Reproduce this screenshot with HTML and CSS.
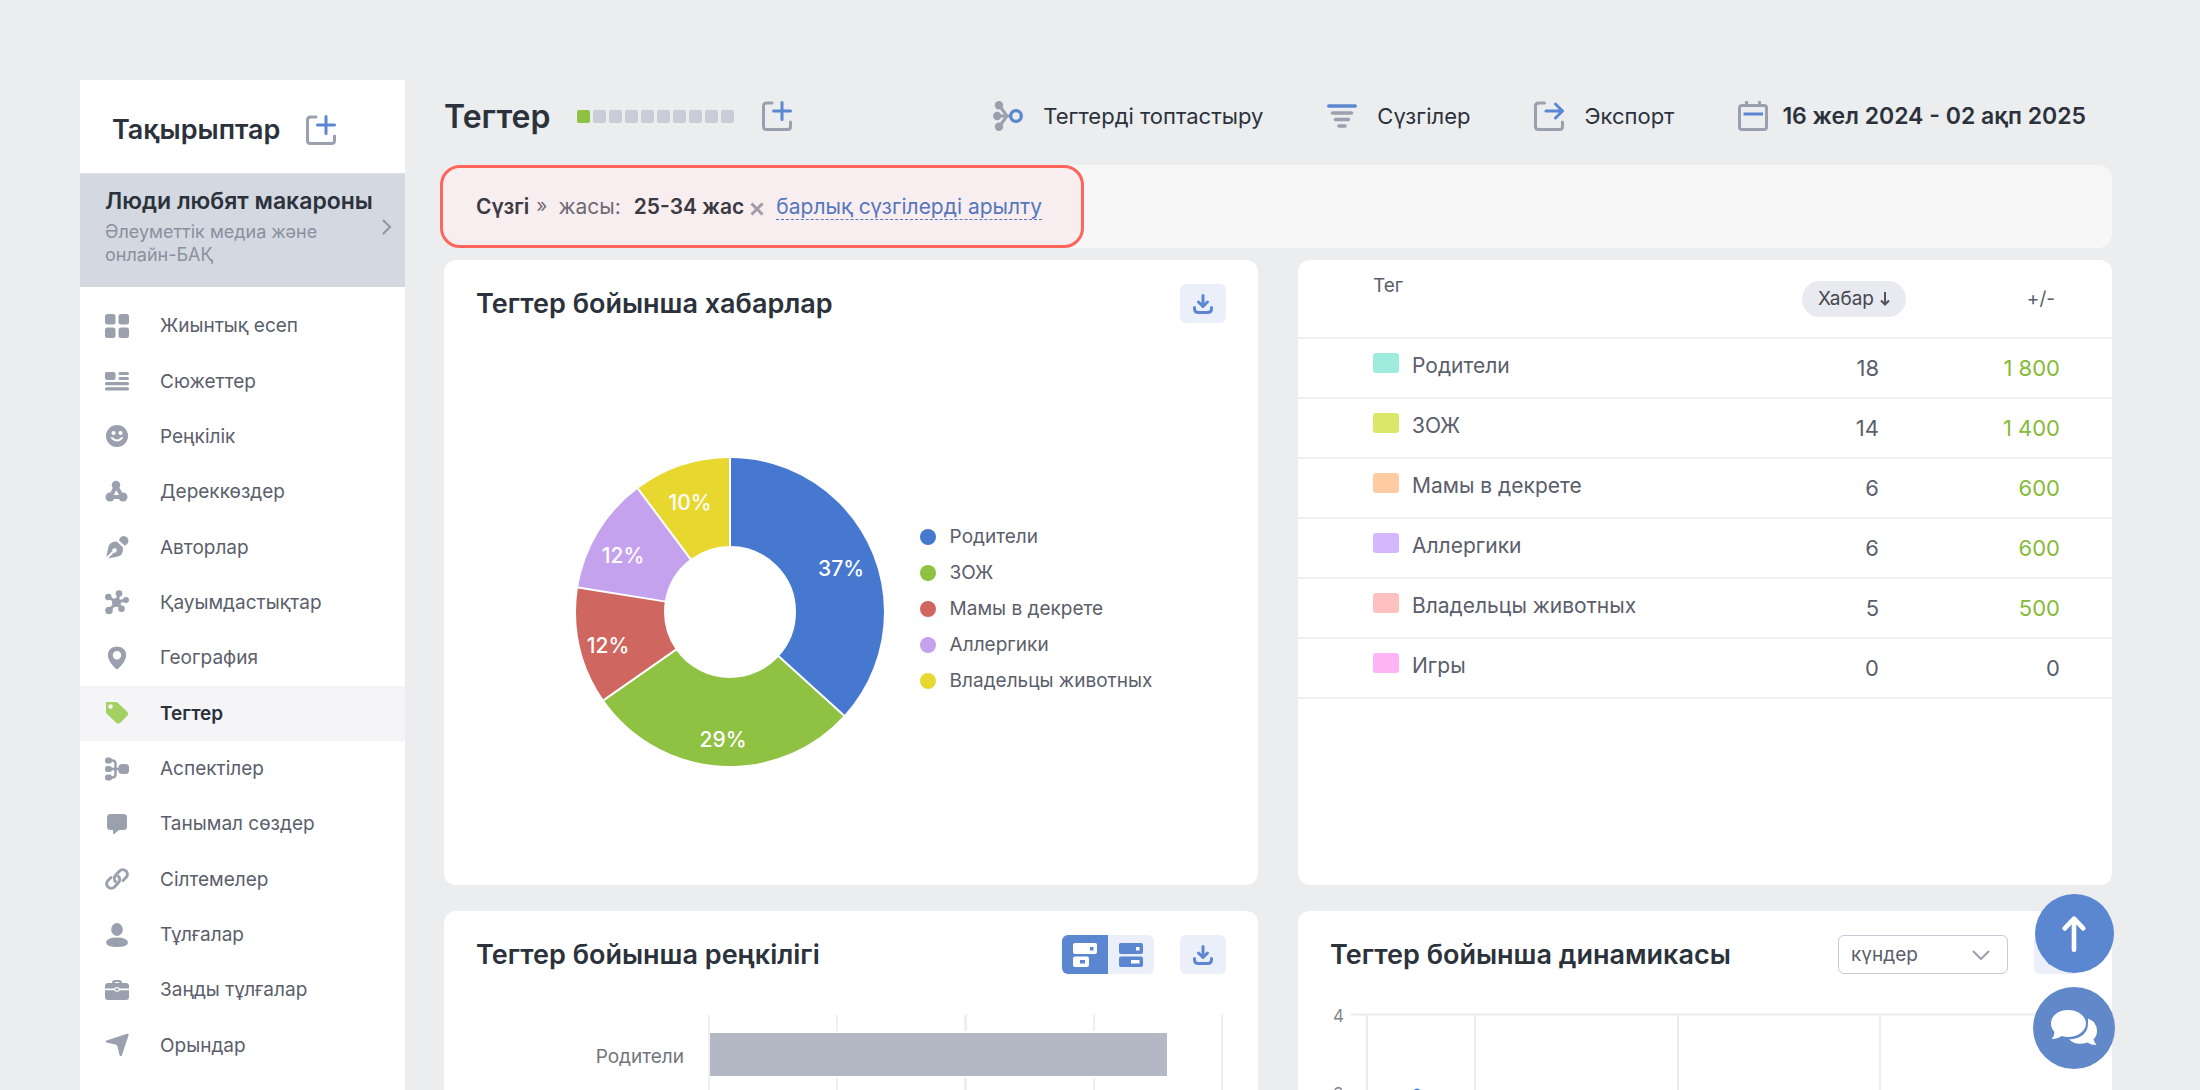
FILE: index.html
```html
<!DOCTYPE html>
<html lang="kk">
<head>
  <meta charset="UTF-8" />
  <meta name="viewport" content="width=device-width, initial-scale=1" />
  <title>Тегтер</title>
  <link rel="stylesheet" href="styles.css">
</head>
<body>
  <div class="app">
    <!-- Sidebar -->
    <aside class="sidebar">
      <div class="sidebar-head">
        <h2>Тақырыптар</h2>
        <button class="icon-btn" type="button" aria-label="Тақырып қосу">
          <svg class="icon-lg" viewBox="0 0 30 30" fill="none" stroke-width="3" stroke-linecap="round"><path d="M10 2H4.500Q1.500 2 1.500 5V25.500Q1.500 28.500 4.500 28.500H25.500Q28.500 28.500 28.500 25.500V21" stroke="#9aa0ae"/><path d="M20 1.500V18.500M11.500 10H28.500" stroke="#5b86d0"/></svg>
        </button>
      </div>

      <a class="project" href="#">
        <span class="project-text">
          <strong>Люди любят макароны</strong>
          <span>Әлеуметтік медиа және онлайн-БАҚ</span>
        </span>
        <svg class="chevron" viewBox="0 0 10 16" fill="none" stroke="#8f96a5" stroke-width="2"><path d="M1 1l7 7-7 7"/></svg>
      </a>

      <nav class="menu">
        <a href="#"><svg viewBox="0 0 24 24"><rect width="10.500" height="10.500" rx="2.500"/><rect x="13.500" width="10.500" height="10.500" rx="2.500"/><rect y="13.500" width="10.500" height="10.500" rx="2.500"/><rect x="13.500" y="13.500" width="10.500" height="10.500" rx="2.500"/></svg>Жиынтық есеп</a>
        <a href="#"><svg viewBox="0 0 24 24"><rect y="3" width="10.500" height="8" rx="2"/><rect x="13.500" y="3" width="10.500" height="3" rx="1.500"/><rect x="13.500" y="8" width="10.500" height="3" rx="1.500"/><rect y="13" width="24" height="3.200" rx="1.500"/><rect y="18.200" width="24" height="3.200" rx="1.500"/></svg>Сюжеттер</a>
        <a href="#"><svg viewBox="0 0 24 24"><circle cx="12" cy="12" r="11"/><circle cx="8.500" cy="9" r="2" fill="#fff"/><circle cx="15.500" cy="9" r="2" fill="#fff"/><path d="M7 14q5 5 10 0" fill="none" stroke="#fff" stroke-width="2" stroke-linecap="round"/></svg>Реңкілік</a>
        <a href="#"><svg viewBox="0 0 24 24"><circle cx="11" cy="5" r="4.300"/><circle cx="5" cy="17" r="4.500"/><circle cx="18" cy="17" r="4.500"/><path d="M11 6L5.500 17H17.500Z" fill="none" stroke="#9aa0ae" stroke-width="4" stroke-linejoin="round"/></svg>Дереккөздер</a>
        <a href="#"><svg viewBox="0 0 24 24"><path d="M12 6.500L18 12.500Q18.500 20 13 21.500L3 23.500 9 17.500A2.200 2.200 0 1 0 7.500 16L1.200 22.300 3.500 11.500Q5 6.500 12 6.500ZM14 5.500Q15 1 19 1 23.500 2 23.500 6 22.500 10 19.500 10.500Z"/></svg>Авторлар</a>
        <a href="#"><svg viewBox="0 0 24 24"><path d="M12 12L14 3.500M12 12L21 10M12 12L16.500 18.500M12 12L4 20.500M12 12L3.500 7.500" stroke="#9aa0ae" stroke-width="3"/><circle cx="11.500" cy="12.500" r="4.500"/><circle cx="14" cy="3.500" r="3.300"/><circle cx="21" cy="10" r="3"/><circle cx="16.500" cy="18.800" r="3.300"/><circle cx="4" cy="20.500" r="3.800"/><circle cx="3.300" cy="7" r="3.300"/></svg>Қауымдастықтар</a>
        <a href="#"><svg viewBox="0 0 24 24"><path fill-rule="evenodd" d="M12 .500Q21 1 21.200 9.500 21 15 13.500 22.500 12 24 10.500 22.500 3 15 2.800 9.500 3 1 12 .500ZM12 5A4.200 4.200 0 1 0 12 13.400 4.200 4.200 0 1 0 12 5Z"/></svg>География</a>
        <a class="active" href="#"><svg viewBox="0 0 24 24"><path fill-rule="evenodd" d="M1 1H10.500Q12 1 13 2L22.500 11Q24 13 22.500 14.500L15 22Q13 23.500 11.500 22L2 13Q1 12 1 10.500ZM5.500 3.300A2.300 2.300 0 1 0 5.500 7.900 2.300 2.300 0 1 0 5.500 3.300Z"/></svg>Тегтер</a>
        <a href="#"><svg viewBox="0 0 24 24"><path d="M5 3.500H7.500Q10.500 3.500 10.500 7V17Q10.500 20.500 7.500 20.500H5M5 12H15" fill="none" stroke="#9aa0ae" stroke-width="2.500"/><rect y=".500" width="7" height="6" rx="2.500"/><rect y="9" width="7" height="6" rx="2.500"/><rect y="17.500" width="7" height="6" rx="2.500"/><rect x="13.500" y="7" width="10.500" height="10" rx="3.500"/></svg>Аспектілер</a>
        <a href="#"><svg viewBox="0 0 24 24"><path d="M5.500 2H18.500Q22 2 22 5.500V14.500Q22 18 18.500 18H14L9.500 21.700Q8 22.500 8 21V18H5.500Q2 18 2 14.500V5.500Q2 2 5.500 2Z"/></svg>Танымал сөздер</a>
        <a href="#"><svg viewBox="0 0 24 24"><g fill="none" stroke="#9aa0ae" stroke-width="3" stroke-linecap="round"><path d="M10.500 14.500a4.500 4.500 0 0 1 0-6l4-4.500a4.500 4.500 0 0 1 6.500 6.500l-3 3"/><path d="M13.500 9.500a4.500 4.500 0 0 1 0 6l-4 4.500a4.500 4.500 0 0 1-6.500-6.500l3-3"/></g></svg>Сілтемелер</a>
        <a href="#"><svg viewBox="0 0 24 24"><ellipse cx="12" cy="6.500" rx="5.800" ry="6.500"/><path d="M12 14.500Q23 14.500 23 20 22 24 12 24T1 20Q1 14.500 12 14.500Z"/></svg>Тұлғалар</a>
        <a href="#"><svg viewBox="0 0 24 24"><path fill-rule="evenodd" d="M7 5Q7 2 10 2H14Q17 2 17 5H21Q24 5 24 8V10.500H15Q14 9 12 9T9 10.500H0V8Q0 5 3 5ZM9.500 5H14.500Q14.500 4 13.500 4H10.500Q9.500 4 9.500 5ZM0 12.200H9Q10 13.800 12 13.800T15 12.200H24V19Q24 22 21 22H3Q0 22 0 19Z"/><ellipse cx="12" cy="11.400" rx="1.700" ry="1.200"/></svg>Заңды тұлғалар</a>
        <a href="#"><svg viewBox="0 0 24 24"><path d="M22 .800Q24 .500 23.500 2.500L17 22Q15.500 24.500 14.500 22L12.500 13.500Q12 12 10.500 11.500L1.500 9.500Q0 8.500 1.500 7.500Z"/></svg>Орындар</a>
      </nav>
    </aside>

    <main class="content">
      <header class="topbar">
        <h1>Тегтер</h1>
        <div class="progress">
          <i class="on"></i><i></i><i></i><i></i><i></i><i></i><i></i><i></i><i></i><i></i>
        </div>
        <button class="icon-btn" type="button" aria-label="Тег қосу">
          <svg class="icon-lg" viewBox="0 0 30 30" fill="none" stroke-width="3" stroke-linecap="round"><path d="M10 2H4.500Q1.500 2 1.500 5V25.500Q1.500 28.500 4.500 28.500H25.500Q28.500 28.500 28.500 25.500V21" stroke="#9aa0ae"/><path d="M20 1.500V18.500M11.500 10H28.500" stroke="#5b86d0"/></svg>
        </button>

        <div class="actions">
          <button type="button">
            <svg class="icon-lg" viewBox="0 0 30 30"><path d="M6 4L14 15 6 26M4 15H17" fill="none" stroke="#9aa0ae" stroke-width="3"/><circle cx="6" cy="4.200" r="4.200" fill="#9aa0ae"/><circle cx="4.200" cy="15" r="4.200" fill="#9aa0ae"/><circle cx="6" cy="25.800" r="4.200" fill="#9aa0ae"/><circle cx="23" cy="15" r="5.300" fill="none" stroke="#5b86d0" stroke-width="3.300"/></svg>
            Тегтерді топтастыру
          </button>
          <button type="button">
            <svg class="icon-lg" viewBox="0 0 30 30" fill="none" stroke="#9aa0ae" stroke-width="3.600" stroke-linecap="round"><path d="M1.800 5H28.200" stroke="#5b86d0"/><path d="M5.500 12H24.500M8.500 18.500H21.500M12 25H18"/></svg>
            Сүзгілер
          </button>
          <button type="button">
            <svg class="icon-lg" viewBox="0 0 30 30" fill="none" stroke-width="3" stroke-linecap="round" stroke-linejoin="round"><path d="M10.500 2H4.500Q1.500 2 1.500 5V25.500Q1.500 28.500 4.500 28.500H25.500Q28.500 28.500 28.500 25.500V21" stroke="#9aa0ae"/><path d="M12 10H28M21.500 3L28.500 10 21.500 17" stroke="#5b86d0"/></svg>
            Экспорт
          </button>
          <button class="date" type="button">
            <svg class="icon-lg" viewBox="0 0 30 30" fill="none" stroke="#9aa0ae" stroke-width="3"><rect x="1.500" y="4.500" width="27" height="24" rx="2.500"/><path d="M8.500 1V4M21.500 1V4" stroke-linecap="round"/><path d="M5.500 13H25" stroke="#5b86d0"/></svg>
            16 жел 2024 - 02 ақп 2025
          </button>
        </div>
      </header>

      <!-- Active filters -->
      <div class="filters">
        <div class="filter-box">
          <strong>Сүзгі</strong>
          <span class="raquo">»</span>
          <span class="filter-name">жасы:</span>
          <strong>25-34 жас</strong>
          <button class="icon-btn remove" type="button" aria-label="Жою">
            <svg viewBox="0 0 14 14" stroke="#a29daa" stroke-width="3"><path d="M1.500 1.500l11 11M12.500 1.500l-11 11"/></svg>
          </button>
          <a href="#">барлық сүзгілерді арылту</a>
        </div>
      </div>

      <div class="grid">
        <section class="card tall">
          <div class="card-head">
            <h3>Тегтер бойынша хабарлар</h3>
            <button class="tool" type="button" aria-label="Жүктеу">
              <svg viewBox="0 0 20 20" fill="none" stroke="#5b86d0" stroke-width="3" stroke-linecap="round" stroke-linejoin="round"><path d="M10 1.500V12M5.500 8L10 12.500 14.500 8M1.500 13.500V14.500Q1.500 18.500 5.500 18.500H14.500Q18.500 18.500 18.500 14.500V13.500"/></svg>
            </button>
          </div>
          <div class="pie-wrap">
            <svg class="pie" viewBox="-154 -154 308 308">
              <g fill="none" stroke-width="88" transform="rotate(-90)">
                <circle r="110" pathLength="49" stroke="#4678d0" stroke-dasharray="18 31"/>
                <circle r="110" pathLength="49" stroke="#8fc143" stroke-dasharray="14 35" stroke-dashoffset="-18"/>
                <circle r="110" pathLength="49" stroke="#cf6660" stroke-dasharray="6 43" stroke-dashoffset="-32"/>
                <circle r="110" pathLength="49" stroke="#c5a2ee" stroke-dasharray="6 43" stroke-dashoffset="-38"/>
                <circle r="110" pathLength="49" stroke="#e7d72f" stroke-dasharray="5 44" stroke-dashoffset="-44"/>
              </g>
              <g stroke="#fff" stroke-width="2">
                <path d="M0-154V-65"/>
                <path d="M0-154V-65" transform="rotate(132.240)"/>
                <path d="M0-154V-65" transform="rotate(235.100)"/>
                <path d="M0-154V-65" transform="rotate(279.180)"/>
                <path d="M0-154V-65" transform="rotate(323.270)"/>
              </g>
              <g class="pie-labels">
                <text x="111" y="-36">37%</text>
                <text x="-7" y="135">29%</text>
                <text x="-122" y="41">12%</text>
                <text x="-107" y="-49">12%</text>
                <text x="-40" y="-102">10%</text>
              </g>
            </svg>
            <ul class="legend">
              <li><i class="c-blue"></i>Родители</li>
              <li><i class="c-green"></i>ЗОЖ</li>
              <li><i class="c-red"></i>Мамы в декрете</li>
              <li><i class="c-violet"></i>Аллергики</li>
              <li><i class="c-yellow"></i>Владельцы животных</li>
            </ul>
          </div>
        </section>

        <section class="card tall table-card">
          <table>
            <thead>
              <tr>
                <th class="tag">Тег</th>
                <th><button class="sort" type="button">Хабар <svg viewBox="0 0 10 14" fill="none" stroke="#50525f" stroke-width="2"><path d="M5 0V12M1 8.500L5 12.500 9 8.500"/></svg></button></th>
                <th>+/-</th>
              </tr>
            </thead>
            <tbody>
              <tr><td class="tag"><i class="s-mint"></i>Родители</td><td>18</td><td class="up">1 800</td></tr>
              <tr><td class="tag"><i class="s-lime"></i>ЗОЖ</td><td>14</td><td class="up">1 400</td></tr>
              <tr><td class="tag"><i class="s-peach"></i>Мамы в декрете</td><td>6</td><td class="up">600</td></tr>
              <tr><td class="tag"><i class="s-lilac"></i>Аллергики</td><td>6</td><td class="up">600</td></tr>
              <tr><td class="tag"><i class="s-rose"></i>Владельцы животных</td><td>5</td><td class="up">500</td></tr>
              <tr><td class="tag"><i class="s-pink"></i>Игры</td><td>0</td><td>0</td></tr>
            </tbody>
          </table>
        </section>

        <section class="card">
          <div class="card-head">
            <h3>Тегтер бойынша реңкілігі</h3>
            <div class="switch">
              <button class="tool on" type="button" aria-label="Сандар">
                <svg class="wide" viewBox="0 0 24 24"><rect width="24" height="11" rx="2" fill="#fff"/><rect x="17" y="4" width="3.500" height="3.500" fill="#5b86d0"/><rect y="13.500" width="16" height="10.500" rx="2" fill="#fff"/><rect x="7" y="17" width="5" height="3.500" fill="#5b86d0"/></svg>
              </button>
              <button class="tool" type="button" aria-label="Пайыздар">
                <svg class="wide" viewBox="0 0 24 24"><rect width="24" height="11" rx="2" fill="#5b86d0"/><rect x="17" y="4" width="3.500" height="3.500" fill="#fff"/><rect y="13.500" width="24" height="10.500" rx="2" fill="#5b86d0"/><rect x="12" y="17" width="8.500" height="3.500" fill="#fff"/></svg>
              </button>
            </div>
            <button class="tool" type="button" aria-label="Жүктеу">
              <svg viewBox="0 0 20 20" fill="none" stroke="#5b86d0" stroke-width="3" stroke-linecap="round" stroke-linejoin="round"><path d="M10 1.500V12M5.500 8L10 12.500 14.500 8M1.500 13.500V14.500Q1.500 18.500 5.500 18.500H14.500Q18.500 18.500 18.500 14.500V13.500"/></svg>
            </button>
          </div>
          <div class="bars">
            <span class="bar-label">Родители</span>
            <div class="plot">
              <div class="bar" style="width: 89%"></div>
            </div>
          </div>
        </section>

        <section class="card">
          <div class="card-head">
            <h3>Тегтер бойынша динамикасы</h3>
            <select aria-label="Кезең">
              <option>күндер</option>
              <option>апталар</option>
              <option>айлар</option>
            </select>
            <button class="tool" type="button" aria-label="Жүктеу">
              <svg viewBox="0 0 20 20" fill="none" stroke="#5b86d0" stroke-width="3" stroke-linecap="round" stroke-linejoin="round"><path d="M10 1.500V12M5.500 8L10 12.500 14.500 8M1.500 13.500V14.500Q1.500 18.500 5.500 18.500H14.500Q18.500 18.500 18.500 14.500V13.500"/></svg>
            </button>
          </div>
          <svg class="line-chart" viewBox="0 0 750 300">
            <g stroke="#ececef" stroke-width="2">
              <path d="M21 10.500H748M21 90.500H748"/>
              <path d="M37 10V300M145 10V300M348 10V300M550 10V300"/>
            </g>
            <path d="M66 150L82 90Q87 81 92 90L108 150" fill="none" stroke="#4678d0" stroke-width="2"/>
            <text x="3" y="18">4</text>
            <text x="3" y="96">3</text>
          </svg>
        </section>
      </div>
    </main>
  </div>

  <!-- Floating buttons -->
  <div class="floating">
    <button class="fab" type="button" aria-label="Жоғары">
      <svg viewBox="0 0 28 40" fill="none" stroke="#fff" stroke-width="5" stroke-linecap="round" stroke-linejoin="round"><path d="M14 37V4M4 14L14 3.500 24 14"/></svg>
    </button>
    <button class="fab chat" type="button" aria-label="Чат">
      <svg viewBox="0 0 48 38" fill="#fff"><path d="M38 9.500Q47 13 47 22 47 27 43.500 30 44 33 46.500 36 41 36 37.500 33.500 26 37 19 30.500 38 29 38 14Z"/><path d="M18 1C28 1 36 7 36 14.500S28 28 18 28Q14.500 28 11.500 27 7.500 30 1.500 30 4.500 27 4.500 23 1 19.500 1 14.500C1 7 8 1 18 1Z"/></svg>
    </button>
  </div>
</body>
</html>
```
FILE: styles.css
```css
* {
  margin: 0;
  padding: 0;
  box-sizing: border-box;
  font-family: Inter, 'Noto Sans', sans-serif;
}

body {
  background: #ecedef;
  color: #2b323b;
  font-size: 19px;
}

button,
select {
  border: none;
  background: none;
  color: inherit;
  font-size: inherit;
  cursor: pointer;
}

svg {
  display: block;
  flex: none;
}

a {
  text-decoration: none;
}

.app {
  display: flex;
  gap: 39px;
  height: 100vh;
  padding: 80px 88px 0 80px;
  overflow: hidden;
}

.icon-lg {
  width: 30px;
  height: 30px;
}

/* Sidebar */
.sidebar {
  display: flex;
  flex-direction: column;
  flex: none;
  width: 325px;
  background: #fff;
}

.sidebar-head {
  display: flex;
  align-items: center;
  gap: 26px;
  height: 93px;
  padding: 6px 32px 0;
}

.sidebar-head h2 {
  font-size: 27px;
  font-weight: 600;
}

.project {
  display: flex;
  align-items: center;
  justify-content: space-between;
  padding: 13px 13px 21px 25px;
  background: #d4d8e1;
  border-top: 1px solid #dfe0e4;
}

.project-text strong {
  display: block;
  margin-bottom: 5px;
  color: #2b323b;
  font-size: 23px;
  font-weight: 600;
  line-height: 28px;
  white-space: nowrap;
}

.project-text span {
  display: block;
  max-width: 230px;
  color: #8a90a0;
  font-size: 18px;
  line-height: 23px;
}

.chevron {
  width: 10px;
  height: 16px;
  margin-left: -20px;
}

.menu {
  display: grid;
  grid-auto-rows: 1fr;
  flex: 1;
  padding: 11px 0 17px;
}

.menu a {
  display: flex;
  align-items: center;
  gap: 31px;
  padding: 0 25px;
  color: #5b5e6b;
}

.menu svg {
  width: 24px;
  height: 24px;
  fill: #9aa0ae;
}

.menu .active {
  background: #f5f5f7;
  color: #2b323b;
  font-weight: 600;
}

.menu .active svg {
  fill: #a3d062;
}

/* Top bar */
.content {
  flex: 1;
  min-width: 0;
}

.topbar {
  display: flex;
  align-items: center;
  height: 72px;
  margin-bottom: 14px;
  padding-right: 26px;
}

.topbar h1 {
  margin-right: 27px;
  font-size: 32px;
  font-weight: 600;
}

.progress {
  display: flex;
  gap: 3px;
  margin-right: 28px;
}

.progress i {
  width: 13px;
  height: 13px;
  border-radius: 2px;
  background: #c9cdd7;
}

.progress .on {
  background: #8fc143;
}

.actions {
  display: flex;
  gap: 64px;
  margin-left: auto;
}

.actions button {
  display: flex;
  align-items: center;
  gap: 20px;
  font-size: 22px;
  white-space: nowrap;
}

.actions .date {
  gap: 14px;
  font-size: 23px;
  font-weight: 600;
}

/* Filters */
.filters {
  margin-bottom: 13px;
  border-radius: 14px;
  background: #f7f7f7;
}

.filter-box {
  display: flex;
  align-items: center;
  width: 644px;
  height: 83px;
  margin: -1px -4px;
  padding-left: 33px;
  border: 3px solid #ff665b;
  border-radius: 20px;
  background: #f8eeef;
  color: #3a3a42;
  font-size: 21px;
  white-space: nowrap;
}

.filter-box strong {
  font-weight: 600;
}

.filter-box .raquo {
  margin: 0 11px 3px 7px;
  color: #6d6a74;
  font-size: 19px;
}

.filter-box .filter-name {
  margin-right: 13px;
  color: #6d6a74;
}

.filter-box .remove {
  margin: 4px 12px 0 6px;
}

.remove svg {
  width: 14px;
  height: 14px;
}

.filter-box a {
  border-bottom: 1px dashed #5577bd;
  color: #5577bd;
}

/* Cards */
.grid {
  display: grid;
  grid-template-columns: 1fr 1fr;
  gap: 26px 40px;
}

.card {
  display: flex;
  flex-direction: column;
  padding: 24px 32px;
  border-radius: 12px;
  background: #fff;
}

.tall {
  min-height: 625px;
}

.card-head {
  display: flex;
  align-items: center;
  gap: 26px;
}

.card-head h3 {
  flex: 1;
  font-size: 27px;
  font-weight: 600;
}

.tool {
  display: flex;
  align-items: center;
  justify-content: center;
  width: 46px;
  height: 39px;
  border-radius: 6px;
  background: #eaeff9;
}

.tool svg {
  width: 20px;
  height: 20px;
}

.tool .wide {
  width: 24px;
  height: 24px;
}

.switch {
  display: flex;
}

.switch .tool {
  border-radius: 0 6px 6px 0;
}

.switch .on {
  border-radius: 6px 0 0 6px;
  background: #5b86d0;
}

/* Pie */
.pie-wrap {
  display: flex;
  flex: 1;
  align-items: center;
  justify-content: center;
  gap: 36px;
  padding: 40px 0 0 26px;
}

.pie {
  width: 308px;
  height: 308px;
}

.pie-labels {
  fill: #fff;
  font-size: 21px;
  font-weight: 500;
  text-anchor: middle;
}

.legend {
  padding-bottom: 7px;
  list-style: none;
  color: #5b5e6b;
}

.legend li {
  display: flex;
  align-items: center;
  gap: 14px;
  line-height: 36px;
}

.legend i {
  width: 16px;
  height: 16px;
  border-radius: 50%;
}

.c-blue { background: #4678d0; }
.c-green { background: #8fc143; }
.c-red { background: #cf6660; }
.c-violet { background: #c5a2ee; }
.c-yellow { background: #e7d72f; }

/* Table */
.table-card {
  padding: 0;
}

table {
  width: 100%;
  border-collapse: collapse;
}

th,
td {
  border-bottom: 2px solid #f0f0f2;
  color: #5b5e6b;
  font-weight: 400;
  text-align: right;
}

th {
  height: 78px;
  font-size: 19px;
}

td {
  height: 60px;
  padding-right: 27px;
  font-size: 22px;
}

th:last-child {
  width: 206px;
  padding-right: 57px;
}

td:last-child {
  padding-right: 52px;
}

th.tag {
  padding: 14px 0 0 75px;
  text-align: left;
  vertical-align: top;
}

td.tag {
  padding: 0 0 6px 75px;
  font-size: 21px;
  text-align: left;
}

td.up {
  color: #86ba37;
}

.tag i {
  display: inline-block;
  width: 26px;
  height: 20px;
  margin-right: 13px;
  border-radius: 3px;
}

.s-mint { background: #9febdd; }
.s-lime { background: #dbe767; }
.s-peach { background: #ffcba2; }
.s-lilac { background: #d3b8fd; }
.s-rose { background: #ffc0c0; }
.s-pink { background: #ffb5f5; }

.sort {
  display: inline-flex;
  align-items: center;
  gap: 6px;
  height: 36px;
  padding: 0 16px;
  border-radius: 18px;
  background: #e9eaef;
  color: #44464f;
}

.sort svg {
  width: 10px;
  height: 14px;
}

/* Tone chart */
.bars {
  display: flex;
  align-items: flex-start;
  gap: 24px;
  padding: 41px 3px 0 0;
}

.bar-label {
  width: 208px;
  color: #73757d;
  line-height: 83px;
  text-align: right;
}

.plot {
  flex: 1;
  height: 240px;
  border-right: 2px solid #efeff1;
  background: repeating-linear-gradient(90deg, #efeff1 0 2px, #fff 2px 25%);
}

.bar {
  height: 47px;
  margin: 16px 0 0 2px;
  border: solid #fff;
  border-width: 2px 0;
  background: #b4b8c4;
}

/* Dynamics chart */
select {
  width: 170px;
  height: 39px;
  padding: 0 12px;
  border: 1px solid #c8cad6;
  border-radius: 6px;
  color: #5b5e6b;
  appearance: none;
  background: url("data:image/svg+xml,%3Csvg xmlns='http://www.w3.org/2000/svg' viewBox='0 0 18 10' fill='none' stroke='%239aa0ae' stroke-width='2'%3E%3Cpath d='M1 1l8 8 8-8'/%3E%3C/svg%3E") no-repeat right 17px center / 18px 10px;
}

.line-chart {
  width: 100%;
  margin-top: 30px;
}

.line-chart text {
  fill: #83868f;
  font-size: 17px;
}

/* Floating buttons */
.floating {
  position: fixed;
  right: 85px;
  bottom: 21px;
  display: flex;
  flex-direction: column;
  align-items: center;
  gap: 14px;
}

.fab {
  display: flex;
  align-items: center;
  justify-content: center;
  width: 79px;
  height: 79px;
  border-radius: 50%;
  background: #5b86d0;
}

.fab svg {
  width: 26px;
  height: 38px;
}

.fab.chat {
  width: 82px;
  height: 82px;
  background: #6189c9;
}

.fab.chat svg {
  width: 48px;
  height: 38px;
}
```
